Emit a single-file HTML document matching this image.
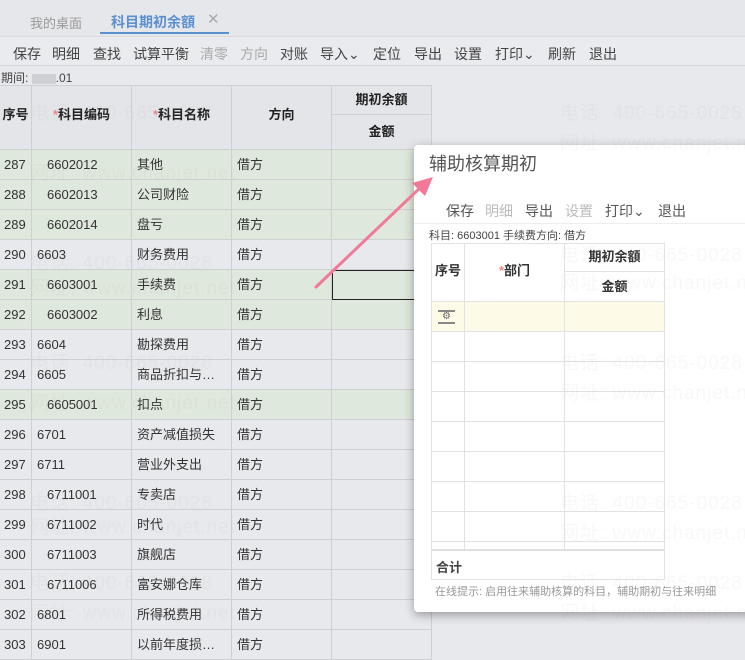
<!DOCTYPE html>
<html><head><meta charset="utf-8"><style>
*{margin:0;padding:0;box-sizing:border-box}
body{width:745px;height:650px;overflow:hidden;background:#e8e9ed;font-family:"Liberation Sans","Noto Sans CJK SC",sans-serif;font-size:13px;color:#333;position:relative}
.a{position:absolute;white-space:nowrap}
.t{position:absolute;white-space:nowrap;top:44px;font-size:14px;color:#444}
.dt{position:absolute;white-space:nowrap;top:201px;font-size:14px;color:#555}
.cell{position:absolute;border-right:1px solid #cfd0d4;border-bottom:1px solid #cfd0d4;line-height:29px;font-size:13px;color:#333;overflow:hidden;white-space:nowrap}
.hd{font-weight:bold;text-align:center;color:#222}
.wm{position:absolute;color:rgba(150,150,150,0.07);font-size:19px;white-space:nowrap;letter-spacing:1px}
.d{position:absolute;border-right:1px solid #e2e2e2;border-bottom:1px solid #e2e2e2}
</style></head><body>
<div class="a" style="left:0;top:0;width:745px;height:36px;background:#e6e7eb"></div>
<div class="a" style="left:30px;top:13px;color:#999;font-size:13px">我的桌面</div>
<div class="a" style="left:111px;top:12px;color:#5a8fd0;font-size:14px;font-weight:bold">科目期初余額</div>
<div class="a" style="left:207px;top:10px;color:#aaa;font-size:15px">✕</div>
<div class="a" style="left:100px;top:32px;width:129px;height:2px;background:#5a8fd0"></div>
<div class="a" style="left:0;top:36px;width:745px;height:30px;background:#eaebef;border-top:1px solid #dcdde1;border-bottom:1px solid #d8d9dd"></div>
<div class="t" style="left:13px">保存</div><div class="t" style="left:52px">明细</div><div class="t" style="left:93px">查找</div><div class="t" style="left:133px">试算平衡</div><div class="t" style="left:200px;color:#aaa">清零</div><div class="t" style="left:240px;color:#aaa">方向</div><div class="t" style="left:280px">对账</div><div class="t" style="left:320px">导入⌄</div><div class="t" style="left:373px">定位</div><div class="t" style="left:414px">导出</div><div class="t" style="left:454px">设置</div><div class="t" style="left:495px">打印⌄</div><div class="t" style="left:548px">刷新</div><div class="t" style="left:589px">退出</div>
<div class="a" style="left:1px;top:69px;font-size:12px;color:#444">期间: <span style="display:inline-block;width:24px;height:10px;background:#cfd0d4;vertical-align:middle"></span>.01</div>
<div class="a" style="left:0;top:85px;width:432px;height:65px;background:#e4e5e9;border-top:1px solid #cfd0d4"></div>
<div class="cell hd" style="left:0;top:85px;width:32px;height:65px;line-height:60px">序号</div>
<div class="cell hd" style="left:32px;top:85px;width:100px;height:65px;line-height:60px"><span style="color:#e88">*</span>科目编码</div>
<div class="cell hd" style="left:132px;top:85px;width:100px;height:65px;line-height:60px"><span style="color:#e88">*</span>科目名称</div>
<div class="cell hd" style="left:232px;top:85px;width:100px;height:65px;line-height:60px">方向</div>
<div class="cell hd" style="left:332px;top:85px;width:100px;height:30px">期初余額</div>
<div class="cell hd" style="left:332px;top:115px;width:100px;height:35px;line-height:33px">金额</div>
<div id="rows"></div>
<div class="a" style="left:332px;top:270px;width:100px;height:30px;border:1.5px solid #222"></div>
<div class="wm" style="left:30px;top:98px">电话: 400-665-0028</div>
<div class="wm" style="left:30px;top:158px">网址: www.chanjet.net</div>
<div class="wm" style="left:30px;top:248px">电话: 400-665-0028</div>
<div class="wm" style="left:30px;top:273px">网址: www.chanjet.net</div>
<div class="wm" style="left:30px;top:348px">电话: 400-665-0028</div>
<div class="wm" style="left:30px;top:388px">网址: www.chanjet.net</div>
<div class="wm" style="left:30px;top:488px">电话: 400-665-0028</div>
<div class="wm" style="left:30px;top:512px">网址: www.chanjet.net</div>
<div class="wm" style="left:30px;top:568px">电话: 400-665-0028</div>
<div class="wm" style="left:30px;top:598px">网址: www.chanjet.net</div>
<div class="a" style="left:414px;top:145px;width:340px;height:467px;background:#fff;border-radius:4px;box-shadow:0 3px 10px rgba(0,0,0,0.35)"></div>
<div class="a" style="left:429px;top:150px;font-size:18px;color:#555">辅助核算期初</div>
<div class="dt" style="left:446px">保存</div><div class="dt" style="left:485px;color:#bbb">明细</div><div class="dt" style="left:525px">导出</div><div class="dt" style="left:565px;color:#bbb">设置</div><div class="dt" style="left:605px">打印⌄</div><div class="dt" style="left:658px">退出</div>
<div class="a" style="left:414px;top:223px;width:331px;height:1px;background:#eee"></div>
<div class="a" style="left:429px;top:227px;font-size:11px;color:#444">科目: 6603001 手续费方向: 借方</div>
<div class="a" style="left:431px;top:243px;width:234px;height:1px;background:#e2e2e2"></div>
<div class="d" style="left:431px;top:243px;width:34px;height:59px;border-left:1px solid #e2e2e2;text-align:center;font-weight:bold;line-height:56px">序号</div>
<div class="d" style="left:465px;top:243px;width:100px;height:59px;text-align:center;font-weight:bold;line-height:56px"><span style="color:#e88">*</span>部门</div>
<div class="d" style="left:565px;top:243px;width:100px;height:29px;text-align:center;font-weight:bold;line-height:28px">期初余額</div>
<div class="d" style="left:565px;top:272px;width:100px;height:30px;text-align:center;font-weight:bold;line-height:30px">金额</div>
<div id="drows"></div>
<div class="a" style="left:438px;top:310px;width:17px;height:14px;border-top:2px solid #888;border-bottom:2px solid #888;text-align:center;font-size:10px;line-height:10px;color:#666">⚙</div>
<div class="a" style="left:431px;top:550px;width:234px;height:30px;border:1px solid #e2e2e2;border-top:1px solid #ddd;"></div>
<div class="a" style="left:436px;top:557px;font-weight:bold;font-size:13px;color:#444">合计</div>
<div class="a" style="left:435px;top:583px;font-size:11px;color:#999">在线提示: 启用往来辅助核算的科目，辅助期初与往来明细</div>
<div class="wm" style="left:560px;top:98px">电话: 400-665-0028</div>
<div class="wm" style="left:560px;top:128px">网址: www.chanjet.net</div>
<div class="wm" style="left:560px;top:240px">电话: 400-665-0028</div>
<div class="wm" style="left:560px;top:268px">网址: www.chanjet.net</div>
<div class="wm" style="left:560px;top:348px">电话: 400-665-0028</div>
<div class="wm" style="left:560px;top:378px">网址: www.chanjet.net</div>
<div class="wm" style="left:560px;top:488px">电话: 400-665-0028</div>
<div class="wm" style="left:560px;top:518px">网址: www.chanjet.net</div>
<div class="wm" style="left:560px;top:568px">电话: 400-665-0028</div>
<div class="wm" style="left:560px;top:598px">网址: www.chanjet.net</div>
<svg class="a" style="left:0;top:0" width="745" height="650"><line x1="316" y1="287" x2="422" y2="186" stroke="#f07a98" stroke-width="3" stroke-linecap="round"/><polygon points="433,177 412,183 425,196" fill="#f07a98"/></svg>
<script>
var r=[["287","6602012","其他",1,1],["288","6602013","公司财险",1,1],["289","6602014","盘亏",1,1],["290","6603","财务费用",0,0],["291","6603001","手续费",1,1],["292","6603002","利息",1,1],["293","6604","勘探费用",0,0],["294","6605","商品折扣与…",0,0],["295","6605001","扣点",1,1],["296","6701","资产减值损失",0,0],["297","6711","营业外支出",0,0],["298","6711001","专卖店",1,0],["299","6711002","时代",1,0],["300","6711003","旗舰店",1,0],["301","6711006","富安娜仓库",1,0],["302","6801","所得税费用",0,0],["303","6901","以前年度损…",0,0]];
var h="";r.forEach(function(x,i){var y=150+i*30,bg=x[4]?"#dfe8dc":"#e8e9ed";
h+='<div class="cell" style="left:0;top:'+y+'px;width:32px;height:30px;background:'+bg+';padding-left:4px">'+x[0]+'</div>';
h+='<div class="cell" style="left:32px;top:'+y+'px;width:100px;height:30px;background:'+bg+';padding-left:'+(x[3]?15:5)+'px">'+x[1]+'</div>';
h+='<div class="cell" style="left:132px;top:'+y+'px;width:100px;height:30px;background:'+bg+';padding-left:5px">'+x[2]+'</div>';
h+='<div class="cell" style="left:232px;top:'+y+'px;width:100px;height:30px;background:'+bg+';padding-left:5px">借方</div>';
h+='<div class="cell" style="left:332px;top:'+y+'px;width:100px;height:30px;background:'+bg+'"></div>';});
document.getElementById("rows").innerHTML=h;
var d="";for(var i=0;i<9;i++){var y=302+i*30,hh=i==8?8:30,bg=i==0?"#fdfbe8":"#fff";
d+='<div class="d" style="left:431px;top:'+y+'px;width:34px;height:'+hh+'px;border-left:1px solid #e2e2e2;background:'+bg+'"></div>';
d+='<div class="d" style="left:465px;top:'+y+'px;width:100px;height:'+hh+'px;background:'+bg+'"></div>';
d+='<div class="d" style="left:565px;top:'+y+'px;width:100px;height:'+hh+'px;background:'+bg+'"></div>';}
document.getElementById("drows").innerHTML=d;
</script>
</body></html>
